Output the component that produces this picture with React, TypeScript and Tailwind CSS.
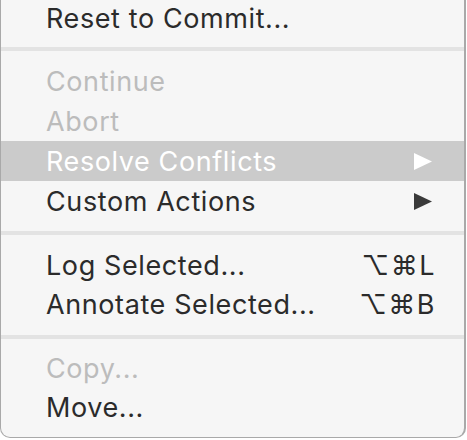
import React from "react";

const font = { fontFamily: "Inter, 'Liberation Sans', sans-serif" };

function Row({ label, shortcut, disabled, active, arrow, h = "h-[40px]" }: { label: string; shortcut?: string; disabled?: boolean; active?: boolean; arrow?: boolean; h?: string }) {
  const color = active ? "text-white bg-[#cbcbcb]" : disabled ? "text-[#bcbcbc]" : "text-[#2b2b2b]";
  const pr = shortcut ? "pr-[28px]" : "pr-[32px]";
  return (
    <div className={`flex items-center justify-between pl-[45px] ${pr} ${h} ${color}`}>
      <span className="text-[27px] leading-none tracking-[0.6px]">{label}</span>
      {shortcut && <span className="text-[27px] leading-none tracking-[1.5px]">{shortcut}</span>}
      {arrow && (
        <svg width="18" height="17" viewBox="0 0 18 17">
          <path d="M0 0 L18 8.5 L0 17 Z" fill={active ? "#ffffff" : "#3a3a3a"} />
        </svg>
      )}
    </div>
  );
}

function Sep({ h, off }: { h: string; off: string }) {
  return (
    <div className={`${h} ${off}`}>
      <div className="h-[4px] bg-[#e3e3e3]" />
    </div>
  );
}

export default function App() {
  return (
    <div className="w-[467px] h-[440px] bg-white overflow-hidden" style={font}>
      <div className="w-[466px] h-[438px] bg-[#f6f6f6] border-l border-r-2 border-b border-[#a9a9a9] rounded-b-[10px] overflow-hidden">
        <Row label="Reset to Commit..." h="h-[37px]" />
        <Sep h="h-[24px]" off="pt-[10px]" />
        <Row label="Continue" disabled />
        <Row label="Abort" disabled />
        <Row label="Resolve Conflicts" active arrow />
        <Row label="Custom Actions" arrow />
        <Sep h="h-[24px]" off="pt-[10px]" />
        <Row label="Log Selected..." shortcut="⌥⌘L" />
        <Row label="Annotate Selected..." shortcut="⌥⌘B" h="h-[39px]" />
        <Sep h="h-[25px]" off="pt-[11px]" />
        <Row label="Copy..." disabled h="h-[39px]" />
        <Row label="Move..." h="h-[39px]" />
      </div>
    </div>
  );
}
